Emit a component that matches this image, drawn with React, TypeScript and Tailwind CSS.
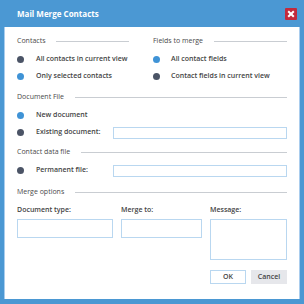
import React from "react";

const Dot = ({ on }: { on?: boolean }) => (
  <span className={`block w-[7px] h-[7px] rounded-full shrink-0 ${on ? "bg-[#3f93d6]" : "bg-[#4b5466]"}`} />
);

const Heading = ({ text, lineRight = 0 }: { text: string; lineRight?: number }) => (
  <div className="flex items-center h-[14px]">
    <span className="text-[7px] text-[#4a4a4a] whitespace-nowrap">{text}</span>
    <span className={`flex-1 h-px bg-[#c9cdd2] ml-[11px] ${lineRight ? "mr-[24px]" : ""}`} />
  </div>
);

const Radio = ({ on, text, gap = "ml-[12px]" }: { on?: boolean; text: string; gap?: string }) => (
  <div className="flex items-center h-[17px]">
    <Dot on={on} />
    <span className={`${gap} text-[7px] font-semibold text-[#444] whitespace-nowrap`}>{text}</span>
  </div>
);

export default function App() {
  return (
    <div
      className="w-[304px] h-[304px] bg-[#4b98d3] flex flex-col overflow-hidden"
      style={{ fontFamily: "'Open Sans', Lato, sans-serif" }}
    >
      <div className="h-[27px] flex items-center justify-between pl-[17px] pr-[7px]">
        <span className="text-[8px] font-bold text-white">Mail Merge Contacts</span>
        <span className="w-[12px] h-[12px] bg-[#c22a3c] rounded-[1px] flex items-center justify-center">
          <svg width="8" height="8" viewBox="0 0 8 8">
            <path d="M1.2 1.2 L6.8 6.8 M6.8 1.2 L1.2 6.8" stroke="white" strokeWidth="2" />
          </svg>
        </span>
      </div>
      <div className="mx-[4px] h-[272px] bg-white border-x border-[#a9cdee] px-[12px] pt-[7px] flex flex-col">
        <div className="flex">
          <div className="w-[136px]">
            <Heading text="Contacts" lineRight={1} />
            <div className="mt-[3px]">
              <Radio text="All contacts in current view" />
              <Radio on text="Only selected contacts" />
            </div>
          </div>
          <div className="flex-1">
            <Heading text="Fields to merge" />
            <div className="mt-[3px]">
              <Radio on text="All contact fields" gap="ml-[11px]" />
              <Radio text="Contact fields in current view" gap="ml-[11px]" />
            </div>
          </div>
        </div>

        <div className="mt-[5px]">
          <Heading text="Document File" />
        </div>
        <div className="mt-[3px]">
          <Radio on text="New document" />
          <div className="flex items-center h-[17px]">
            <Dot />
            <span className="ml-[12px] w-[77px] text-[7px] font-semibold text-[#444]">Existing document:</span>
            <div className="flex-1 h-[12px] border border-[#b9d7f0]" />
          </div>
        </div>

        <div className="mt-[4px]">
          <Heading text="Contact data file" />
        </div>
        <div className="mt-[3px] flex items-center h-[17px]">
          <Dot />
          <span className="ml-[12px] w-[77px] text-[7px] font-semibold text-[#444]">Permanent file:</span>
          <div className="flex-1 h-[12px] border border-[#b9d7f0]" />
        </div>

        <div className="mt-[6px]">
          <Heading text="Merge options" />
        </div>
        <div className="mt-[5px] flex items-start">
          <div className="w-[96px] mr-[8px]">
            <div className="h-[12px] flex items-center text-[7px] font-semibold text-[#444]">Document type:</div>
            <div className="mt-[3px] h-[19px] border border-[#b9d7f0]" />
          </div>
          <div className="w-[81px] mr-[8px]">
            <div className="h-[12px] flex items-center text-[7px] font-semibold text-[#444]">Merge to:</div>
            <div className="mt-[3px] h-[19px] border border-[#b9d7f0]" />
          </div>
          <div className="flex-1">
            <div className="h-[12px] flex items-center text-[7px] font-semibold text-[#444]">Message:</div>
            <div className="mt-[3px] h-[41px] border border-[#b9d7f0]" />
          </div>
        </div>
        <div className="mt-[10px] flex justify-end gap-[5px]">
          <div className="w-[36px] h-[14px] border border-[#b9d7f0] flex items-center justify-center text-[7px] font-semibold text-[#444]">OK</div>
          <div className="w-[36px] h-[14px] bg-[#e6e7eb] flex items-center justify-center text-[7px] font-semibold text-[#444]">Cancel</div>
        </div>
      </div>
    </div>
  );
}
